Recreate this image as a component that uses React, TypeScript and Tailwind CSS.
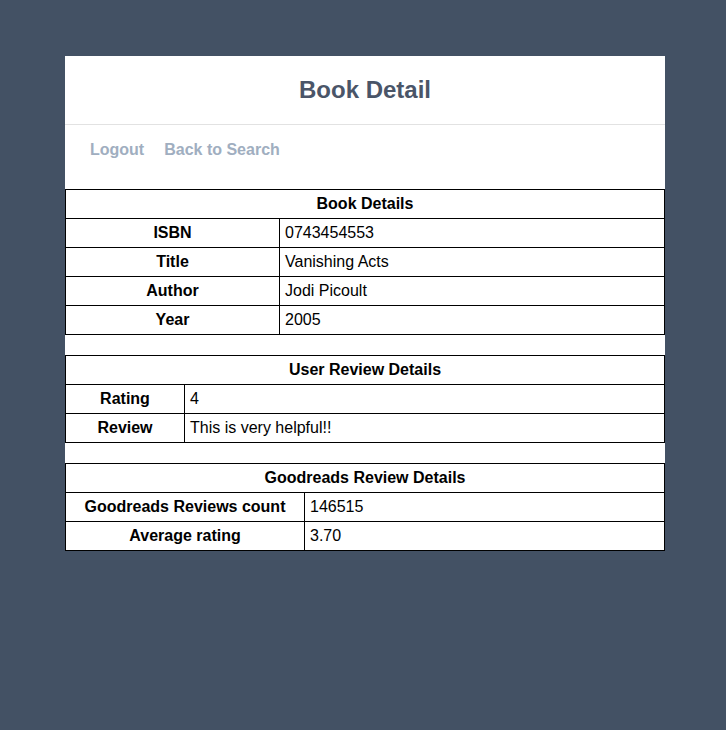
import React from 'react';

type Row = { label: string; value: string };

const DetailTable: React.FC<{ title: string; rows: Row[]; labelWidth: string }> = ({ title, rows, labelWidth }) => (
  <table className="w-[600px] border-collapse text-[16px] text-black">
    <thead>
      <tr>
        <th colSpan={2} className="border border-black px-[5px] py-[5px] text-center font-bold leading-[18px]">
          {title}
        </th>
      </tr>
    </thead>
    <tbody>
      {rows.map((r) => (
        <tr key={r.label}>
          <td className={`border border-black px-[5px] py-[5px] text-center font-bold leading-[18px] ${labelWidth}`}>{r.label}</td>
          <td className="border border-black px-[5px] py-[5px] text-left leading-[18px]">{r.value}</td>
        </tr>
      ))}
    </tbody>
  </table>
);

export default function App() {
  return (
    <div className="min-h-[730px] bg-[#435164] pt-[56px] font-['Liberation_Sans',Arial,sans-serif]">
      <div className="ml-[65px] w-[600px] bg-white">
        <div className="border-b border-[#e2e2e2] pt-[20px] pb-[20px] text-center">
          <h1 className="text-[24px] font-bold leading-[28px] text-[#4a5568]">Book Detail</h1>
        </div>
        <nav className="flex gap-[20px] pl-[25px] pt-[16px] pb-[30px] text-[16px] font-bold leading-[18px] text-[#a0aec0]">
          <a href="#">Logout</a>
          <a href="#">Back to Search</a>
        </nav>
        <DetailTable
          title="Book Details"
          labelWidth="w-[214px]"
          rows={[
            { label: 'ISBN', value: '0743454553' },
            { label: 'Title', value: 'Vanishing Acts' },
            { label: 'Author', value: 'Jodi Picoult' },
            { label: 'Year', value: '2005' },
          ]}
        />
        <div className="h-[20px]" />
        <DetailTable
          title="User Review Details"
          labelWidth="w-[119px]"
          rows={[
            { label: 'Rating', value: '4' },
            { label: 'Review', value: 'This is very helpful!!' },
          ]}
        />
        <div className="h-[20px]" />
        <DetailTable
          title="Goodreads Review Details"
          labelWidth="w-[239px]"
          rows={[
            { label: 'Goodreads Reviews count', value: '146515' },
            { label: 'Average rating', value: '3.70' },
          ]}
        />
      </div>
    </div>
  );
}
